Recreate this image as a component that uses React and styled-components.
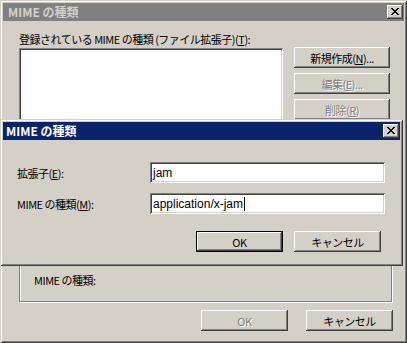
import React from 'react';
import styled, { createGlobalStyle, css } from 'styled-components';

const FACE = '#d4d0c8';

const GlobalStyle = createGlobalStyle`
  html, body {
    margin: 0;
    padding: 0;
    background: ${FACE};
  }
  body {
    font-family: "Noto Sans CJK JP", "Liberation Sans", sans-serif;
    font-size: 11px;
    letter-spacing: -0.5px;
    color: #000;
  }
`;

const raised = css`
  box-shadow: inset -1px -1px #404040, inset 1px 1px #fff,
    inset -2px -2px #808080, inset 2px 2px ${FACE};
`;

const sunken = css`
  box-shadow: inset 1px 1px #808080, inset -1px -1px #fff,
    inset 2px 2px #404040, inset -2px -2px ${FACE};
`;

const Desktop = styled.div`
  position: relative;
  width: 407px;
  height: 343px;
  overflow: hidden;
`;

const Window = styled.div`
  box-sizing: border-box;
  display: flex;
  flex-direction: column;
  width: ${(p) => p.$w}px;
  height: ${(p) => p.$h}px;
  padding: 3px;
  background: ${FACE};
  box-shadow: inset 1px 1px ${FACE}, inset -1px -1px #404040,
    inset 2px 2px #fff, inset -2px -2px #808080;
`;

const FloatingWindow = styled(Window)`
  position: absolute;
  left: ${(p) => p.$x}px;
  top: ${(p) => p.$y}px;
`;

const TitleBar = styled.div`
  display: flex;
  align-items: center;
  justify-content: space-between;
  height: 18px;
  padding: 0 1px 0 ${(p) => (p.$active ? 3 : 5)}px;
  background: ${(p) => (p.$active ? '#0a246a' : '#808080')};
  color: ${(p) => (p.$active ? '#fff' : FACE)};
  flex-shrink: 0;
`;

const TitleText = styled.span`
  font-weight: bold;
  font-size: 12px;
  line-height: 14px;
  letter-spacing: 0;
`;

const CloseButton = styled.div`
  box-sizing: border-box;
  width: 16px;
  height: 14px;
  padding: 3px 0 0 4px;
  background: ${FACE};
  ${raised};
  svg {
    display: block;
  }
`;

const OuterBody = styled.div`
  display: flex;
  flex-direction: column;
  padding: 11px 11px 9px 16px;
`;

const Label = styled.div`
  line-height: 14px;
  height: 14px;
  white-space: nowrap;
`;

const ListRow = styled.div`
  display: flex;
  gap: 11px;
  margin-top: 1px;
`;

const ListBox = styled.div`
  width: 264px;
  height: 152px;
  margin-top: 1px;
  background: #fff;
  ${sunken};
`;

const ButtonColumn = styled.div`
  display: flex;
  flex-direction: column;
  gap: 5px;
`;

const Button = styled.div`
  box-sizing: border-box;
  display: flex;
  align-items: center;
  justify-content: center;
  width: ${(p) => p.$w}px;
  height: ${(p) => p.$h || 21}px;
  background: ${FACE};
  white-space: nowrap;
  line-height: 14px;
  color: ${(p) => (p.$disabled ? '#808080' : '#000')};
  text-shadow: ${(p) => (p.$disabled ? '1px 1px #fff' : 'none')};
  ${(p) =>
    p.$default
      ? css`
          box-shadow: inset 0 0 0 1px #000, inset -2px -2px #404040,
            inset 2px 2px #fff, inset -3px -3px #808080, inset 3px 3px ${FACE};
        `
      : raised};
`;

const GroupBox = styled.div`
  box-sizing: border-box;
  display: flex;
  flex-direction: column;
  justify-content: flex-end;
  width: 373px;
  height: 92px;
  margin-top: 10px;
  padding: 0 14px 14px;
  border: 1px solid #808080;
  box-shadow: inset 1px 1px #fff, 1px 1px #fff;
`;

const BottomButtons = styled.div`
  display: flex;
  justify-content: flex-end;
  gap: 18px;
  margin-top: 8px;
`;

const DialogBody = styled.div`
  display: flex;
  flex-direction: column;
  gap: 10px;
  padding: 22px 15px 11px 14px;
`;

const FieldRow = styled.div`
  display: flex;
  align-items: center;
`;

const FieldLabel = styled.div`
  width: 133px;
  line-height: 14px;
  white-space: nowrap;
`;

const TextBox = styled.div`
  box-sizing: border-box;
  display: flex;
  align-items: center;
  width: 235px;
  height: 21px;
  padding: 0 3px;
  background: #fff;
  font-family: "Liberation Sans", "Noto Sans CJK JP", sans-serif;
  font-size: 12px;
  letter-spacing: 0;
  ${sunken};
`;

const Caret = styled.span`
  display: inline-block;
  width: 1px;
  height: 14px;
  margin-left: 1px;
  background: #000;
`;

const DialogButtons = styled.div`
  display: flex;
  gap: 11px;
  margin-top: 7px;
  padding-left: 179px;
`;

const Key = styled.span`
  text-decoration: underline;
`;

const X_PIXELS = [
  [0, 1, 6, 7],
  [1, 2, 5, 6],
  [2, 3, 4, 5],
  [3, 4],
  [2, 3, 4, 5],
  [1, 2, 5, 6],
  [0, 1, 6, 7],
];

function CloseIcon() {
  return (
    <svg width="8" height="7" viewBox="0 0 8 7" shapeRendering="crispEdges">
      {X_PIXELS.map((row, y) =>
        row.map((x) => <rect key={`${x}-${y}`} x={x} y={y} width="1" height="1" fill="#000" />)
      )}
    </svg>
  );
}

export default function App() {
  return (
    <Desktop>
      <GlobalStyle />
      <Window $w={407} $h={343}>
        <TitleBar>
          <TitleText>MIME の種類</TitleText>
          <CloseButton>
            <CloseIcon />
          </CloseButton>
        </TitleBar>
        <OuterBody>
          <Label>
            登録されている MIME の種類 (ファイル拡張子)(<Key>T</Key>):
          </Label>
          <ListRow>
            <ListBox />
            <ButtonColumn>
              <Button $w={96} $h={21}>
                新規作成(<Key>N</Key>)...
              </Button>
              <Button $w={96} $h={21} $disabled>
                編集(<Key>E</Key>)...
              </Button>
              <Button $w={96} $h={21} $disabled>
                削除(<Key>R</Key>)
              </Button>
            </ButtonColumn>
          </ListRow>
          <GroupBox>
            <Label>MIME の種類:</Label>
          </GroupBox>
          <BottomButtons>
            <Button $w={87} $disabled>
              OK
            </Button>
            <Button $w={87}>キャンセル</Button>
          </BottomButtons>
        </OuterBody>
      </Window>

      <FloatingWindow $x={0} $y={119} $w={403} $h={147}>
        <TitleBar $active>
          <TitleText>MIME の種類</TitleText>
          <CloseButton>
            <CloseIcon />
          </CloseButton>
        </TitleBar>
        <DialogBody>
          <FieldRow>
            <FieldLabel>
              拡張子(<Key>E</Key>):
            </FieldLabel>
            <TextBox>jam</TextBox>
          </FieldRow>
          <FieldRow>
            <FieldLabel>
              MIME の種類(<Key>M</Key>):
            </FieldLabel>
            <TextBox>
              application/x-jam
              <Caret />
            </TextBox>
          </FieldRow>
          <DialogButtons>
            <Button $w={87} $default>
              OK
            </Button>
            <Button $w={87}>キャンセル</Button>
          </DialogButtons>
        </DialogBody>
      </FloatingWindow>
    </Desktop>
  );
}
